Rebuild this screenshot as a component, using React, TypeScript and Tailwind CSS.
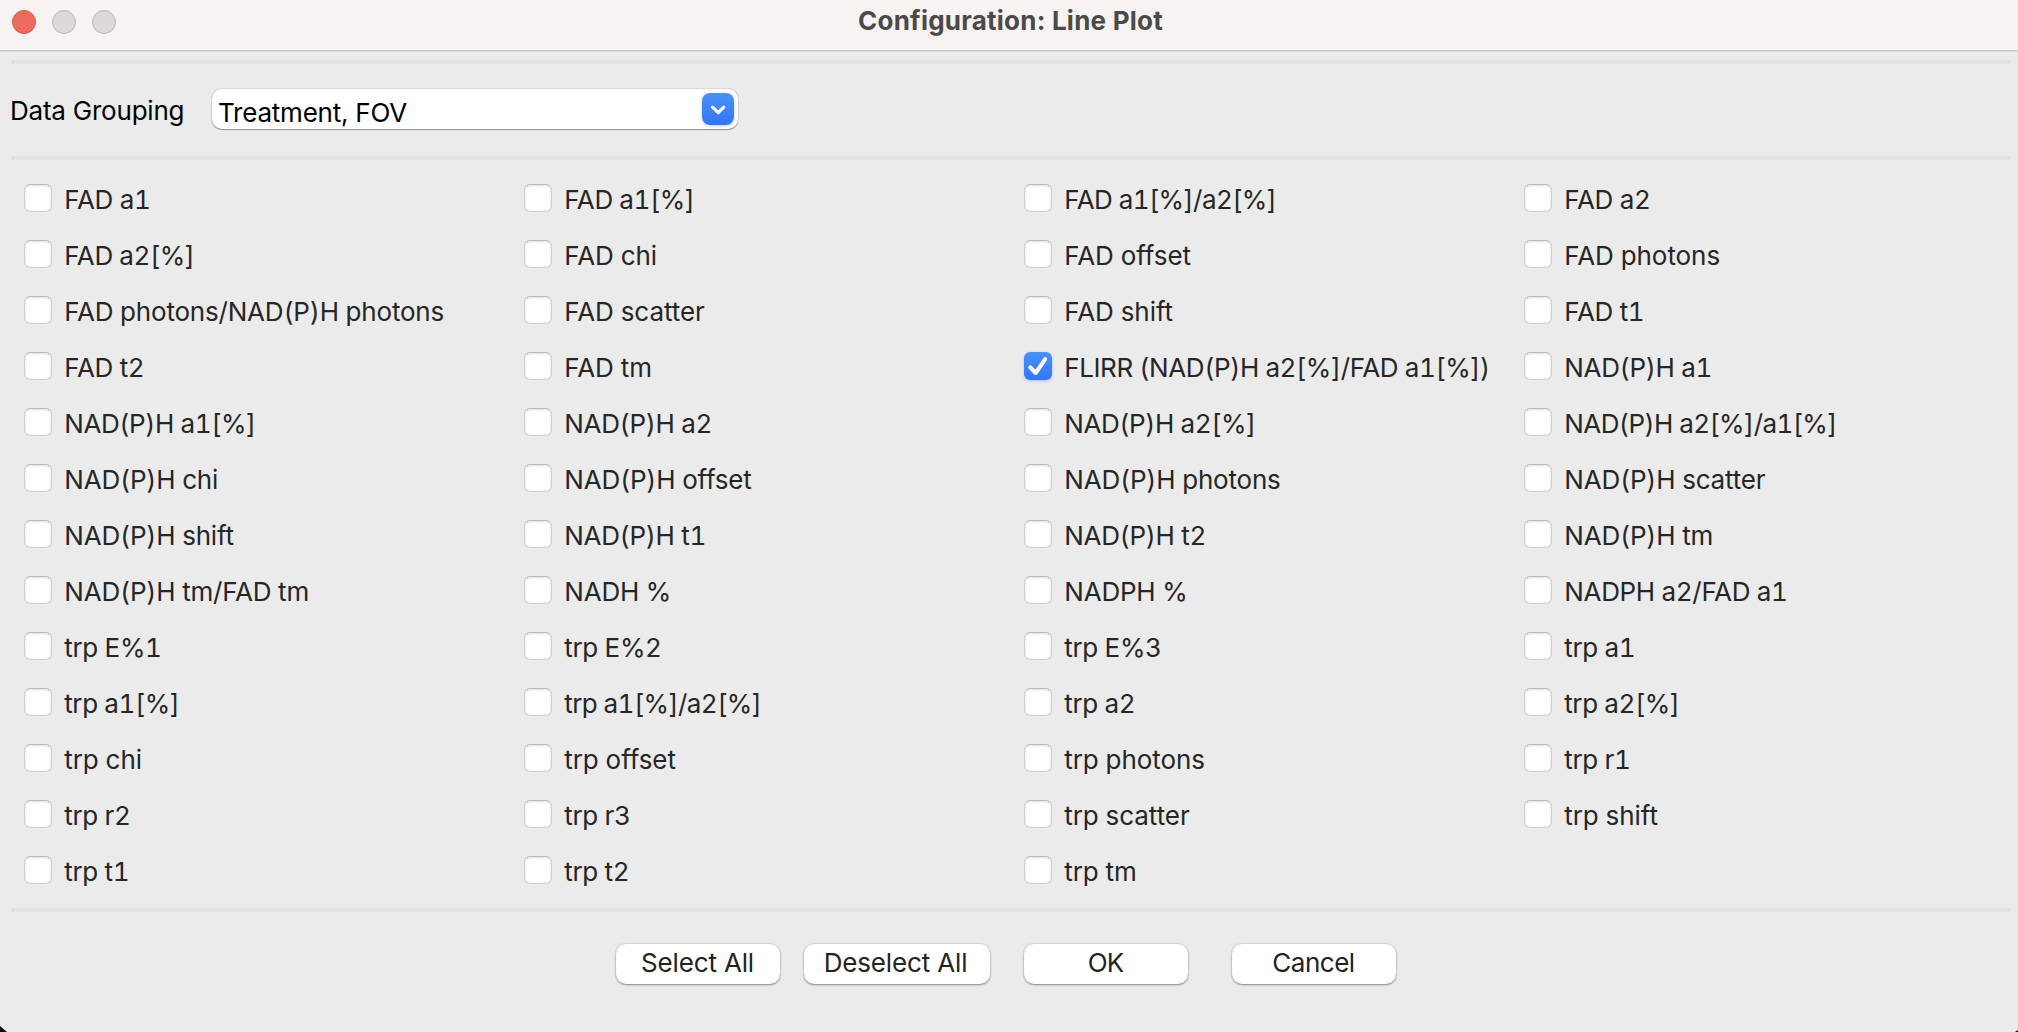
const ROWS: string[][] = [
  ["FAD a1", "FAD a1[%]", "FAD a1[%]/a2[%]", "FAD a2"],
  ["FAD a2[%]", "FAD chi", "FAD offset", "FAD photons"],
  ["FAD photons/NAD(P)H photons", "FAD scatter", "FAD shift", "FAD t1"],
  ["FAD t2", "FAD tm", "FLIRR (NAD(P)H a2[%]/FAD a1[%])", "NAD(P)H a1"],
  ["NAD(P)H a1[%]", "NAD(P)H a2", "NAD(P)H a2[%]", "NAD(P)H a2[%]/a1[%]"],
  ["NAD(P)H chi", "NAD(P)H offset", "NAD(P)H photons", "NAD(P)H scatter"],
  ["NAD(P)H shift", "NAD(P)H t1", "NAD(P)H t2", "NAD(P)H tm"],
  ["NAD(P)H tm/FAD tm", "NADH %", "NADPH %", "NADPH a2/FAD a1"],
  ["trp E%1", "trp E%2", "trp E%3", "trp a1"],
  ["trp a1[%]", "trp a1[%]/a2[%]", "trp a2", "trp a2[%]"],
  ["trp chi", "trp offset", "trp photons", "trp r1"],
  ["trp r2", "trp r3", "trp scatter", "trp shift"],
  ["trp t1", "trp t2", "trp tm"],
];

const CHECKED = "FLIRR (NAD(P)H a2[%]/FAD a1[%])";

// Labels with digits and brackets are set tighter than plain words.
function tracking(label: string) {
  if (label.includes("[%]/a")) return "tracking-[-0.57px]";
  if (label.includes("[")) return "tracking-[-0.4px]";
  if (/\d/.test(label)) return "tracking-[-0.32px]";
  if (label.startsWith("NAD")) return "tracking-[-0.2px]";
  if (label.includes("/")) return "tracking-[-0.2px]";
  return "tracking-[-0.06px]";
}

function Separator() {
  return (
    <div className="ml-3 mr-2 h-1 shrink-0 border-x border-x-[#d9d9d9] bg-[#e3e3e3]" />
  );
}

function Checkbox({ label }: { label: string }) {
  const checked = label === CHECKED;
  return (
    <label className="flex h-14 items-center">
      {checked ? (
        <span className="mb-1 size-7 shrink-0 rounded-[6px] bg-linear-to-b from-[#4a90f8] to-[#3177f6] shadow-[0_1px_3px_rgba(49,119,246,0.35)]">
          <svg viewBox="0 0 28 28" className="size-7" fill="none" stroke="white" strokeWidth="4" strokeLinecap="round" strokeLinejoin="round">
            <path d="M6.3 15.4 L11.7 21 L21.2 7.2" />
          </svg>
        </span>
      ) : (
        <span className="mb-1 size-7 shrink-0 rounded-[6px] border border-[#cfcfcf] border-t-[#bababa] bg-white shadow-[inset_0_1px_3px_rgba(0,0,0,0.13)]" />
      )}
      <span className={`mb-px ml-[12.25px] whitespace-nowrap text-[#262626] tabular-nums ${tracking(label)}`}>
        {label}
      </span>
    </label>
  );
}

function Button({ label, className }: { label: string; className: string }) {
  return (
    <button
      className={`h-10 rounded-[10px] bg-white pb-[3px] leading-[37px] text-[#232323] shadow-[0_0_1px_1px_rgba(0,0,0,0.08),0_1px_2px_rgba(0,0,0,0.38)] ${className}`}
    >
      {label}
    </button>
  );
}

export default function App() {
  return (
    <div className="relative flex h-[1032px] w-[2018px] flex-col overflow-hidden bg-[#ebebeb] font-['Inter',sans-serif] text-[26px]">
      <header className="grid h-[52px] shrink-0 grid-cols-[1fr_auto_1fr] items-start border-b border-[#d9d9d9] bg-[#f7f3f2] shadow-[inset_0_-1px_0_#c2c2c4]">
        <div className="flex gap-4 pt-[10px] pl-3">
          <span className="size-6 rounded-full border border-[#d8564c] bg-[#ed6b5f]" />
          <span className="size-6 rounded-full border border-[#bdb9b8] bg-[#dcd8d7]" />
          <span className="size-6 rounded-full border border-[#bdb9b8] bg-[#dcd8d7]" />
        </div>
        <h1 className="ml-[3px] h-[41px] font-bold leading-[41px] tracking-[0.23px] text-[#4b4949]">
          Configuration: Line Plot
        </h1>
      </header>

      <div className="h-2 shrink-0" />
      <Separator />

      <div className="flex h-[92px] shrink-0 items-start pt-[25px] pl-[10px] text-black">
        <span className="w-[202px] leading-[43px] tracking-[-0.22px]">Data Grouping</span>
        <div className="flex h-10 w-[526px] items-center justify-between rounded-[10px] bg-white pr-1 pl-[6px] shadow-[0_0_0_1px_rgba(0,0,0,0.08),0_1px_1px_rgba(0,0,0,0.35)]">
          <span className="pt-[7px] leading-10 tracking-[-0.22px]">Treatment, FOV</span>
          <span className="size-8 rounded-[8px] bg-linear-to-b from-[#4a90f8] to-[#3177f6] shadow-[0_1px_3px_rgba(49,119,246,0.35)]">
            <svg viewBox="0 0 32 32" className="size-8" fill="none" stroke="white" strokeWidth="3.2" strokeLinecap="round" strokeLinejoin="round">
              <path d="M10.6 14.2 L16.2 19.6 L21.8 14.2" />
            </svg>
          </span>
        </div>
      </div>
      <Separator />

      <main className="grid shrink-0 grid-cols-[500px_500px_500px_1fr] pt-3 pb-2 pl-6">
        {ROWS.flat().map((label) => (
          <Checkbox key={label} label={label} />
        ))}
      </main>
      <Separator />

      <footer className="flex pt-8 pl-[616px]">
        <Button label="Select All" className="w-[164px] pr-px tracking-[-0.15px]" />
        <Button label="Deselect All" className="ml-6 w-[186px] pr-[3px] tracking-[-0.15px]" />
        <Button label="OK" className="ml-[34px] w-[164px] pr-px tracking-[-1px]" />
        <Button label="Cancel" className="ml-11 w-[164px] pr-px tracking-[-0.5px]" />
      </footer>

      {/* Desktop showing behind the window's rounded corners */}
      <span className="absolute bottom-0 left-0 h-1.5 w-[7px] bg-[#111] [clip-path:polygon(0_0,100%_100%,0_100%)]" />
      <span className="absolute right-0 bottom-0 h-0.5 w-[3px] bg-[#111] [clip-path:polygon(100%_0,100%_100%,0_100%)]" />
    </div>
  );
}
